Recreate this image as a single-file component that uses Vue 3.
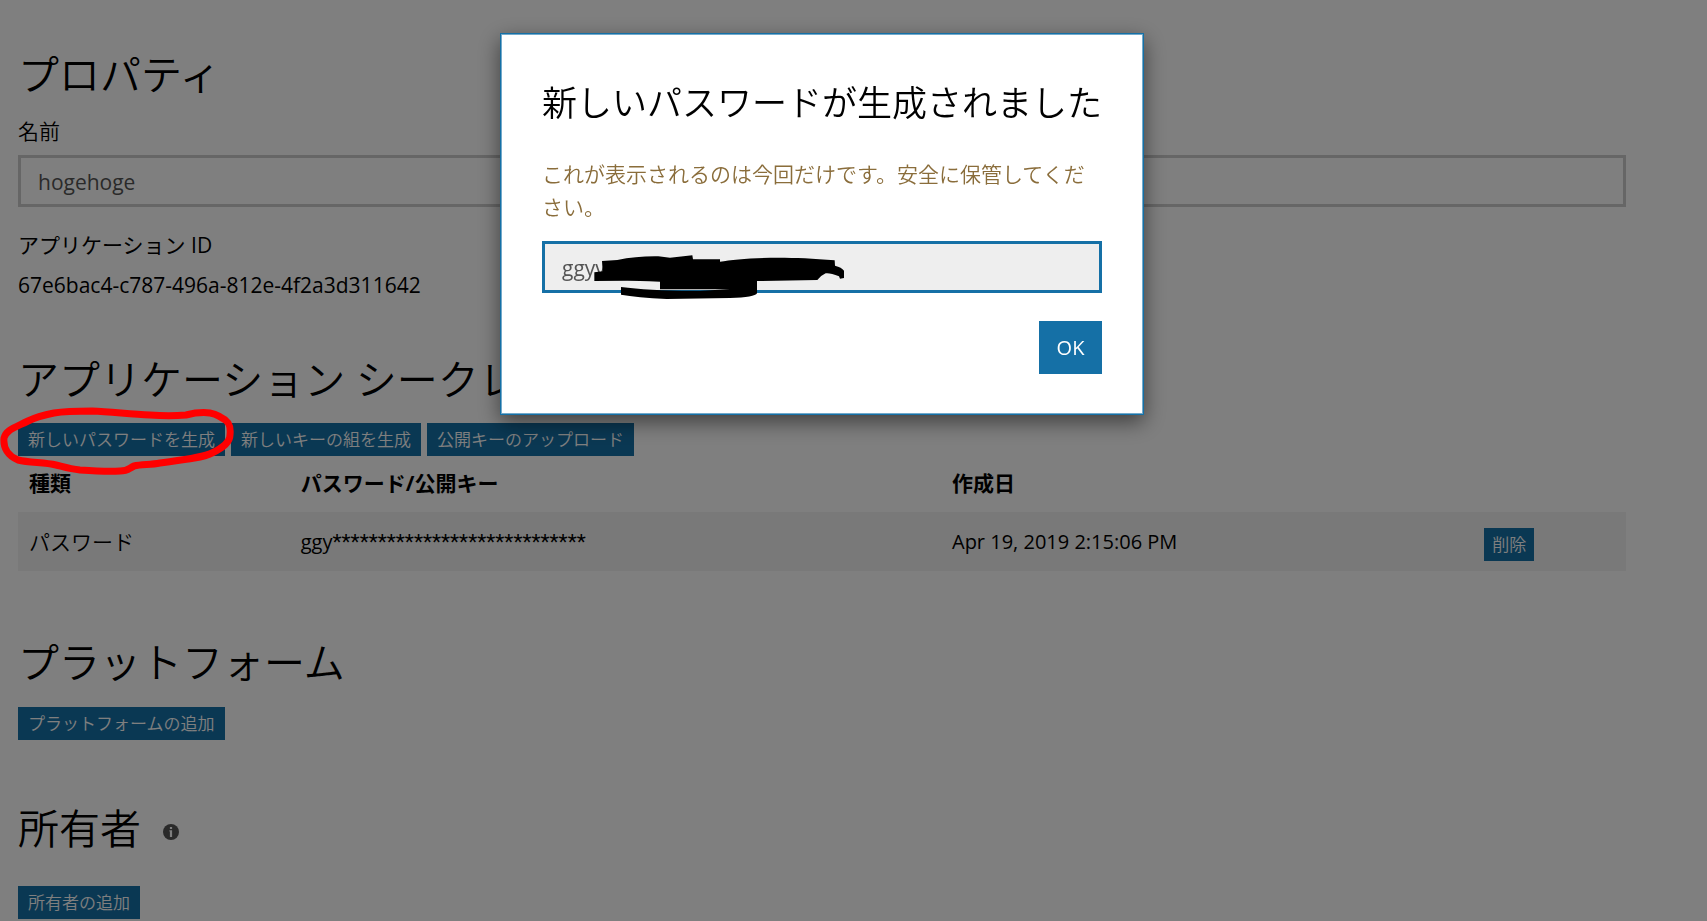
<template>
  <main class="page">
    <section class="properties">
      <h2>プロパティ</h2>
      <label class="field-label" for="appName">名前</label>
      <input id="appName" v-model="appName" class="text-input" type="text" />
      <div class="field-label app-id-label">アプリケーション ID</div>
      <p class="app-id">{{ appId }}</p>
    </section>

    <section class="secrets">
      <h2>アプリケーション シークレット</h2>
      <div class="button-row">
        <button class="btn" type="button" @click="showDialog = true">新しいパスワードを生成</button>
        <button class="btn" type="button">新しいキーの組を生成</button>
        <button class="btn" type="button">公開キーのアップロード</button>
      </div>
      <table class="secret-table">
        <thead>
          <tr>
            <th class="col-type">種類</th>
            <th class="col-key">パスワード/公開キー</th>
            <th class="col-date">作成日</th>
            <th></th>
          </tr>
        </thead>
        <tbody>
          <tr v-for="secret in secrets" :key="secret.prefix">
            <td class="type">{{ secret.type }}</td>
            <td>{{ secret.prefix }}<span class="mask">{{ secret.mask }}</span></td>
            <td>{{ secret.created }}</td>
            <td class="action"><button class="btn btn-delete" type="button">削除</button></td>
          </tr>
        </tbody>
      </table>
    </section>

    <section class="platforms">
      <h2>プラットフォーム</h2>
      <button class="btn" type="button">プラットフォームの追加</button>
    </section>

    <section class="owners">
      <h2>
        所有者
        <svg class="info-icon" viewBox="0 0 16 16" aria-hidden="true">
          <circle cx="8" cy="8" r="8" fill="#555" />
          <path d="M6.9 3h2.2v2H6.9zM6.4 6.2h2.7v6.8H6.9V7.4h-.5z" fill="#fff" />
        </svg>
      </h2>
      <button class="btn" type="button">所有者の追加</button>
    </section>
  </main>

  <div v-if="showDialog" class="overlay">
    <div class="dialog" role="dialog" aria-labelledby="dialogTitle">
      <h3 id="dialogTitle">新しいパスワードが生成されました</h3>
      <label class="warning" for="newPassword">
        これが表示されるのは今回だけです。安全に保管してください。
      </label>
      <div class="password-wrap">
        <input id="newPassword" class="text-input password" type="text" :value="password" readonly />
        <svg class="scribble" viewBox="0 0 960 240" aria-hidden="true">
          <path
            d="M186 93L232 90Q290 78 355 79L390 83L457 76L459 88L540 88L540 95C600 85 720 76 884 91L885 107Q905 112 912 122L912 144L900 146L897 139Q870 128 857 130Q840 138 832 150L651 153L651 190Q645 202 570 204L380 207Q290 202 243 194L243 171Q330 183 480 182L570 178L360 178L360 155Q290 152 262 152L163 153L163 127L188 124Z"
          />
        </svg>
      </div>
      <div class="dialog-footer">
        <button class="btn-ok" type="button" @click="showDialog = false">OK</button>
      </div>
    </div>
  </div>

  <!-- hand-drawn ring around the generate button -->
  <svg class="ring" viewBox="0 0 240 72" aria-hidden="true">
    <path
      d="M4 38C6 30 14 28 28 21C36 17 44 15 54 13C66 11 78 11 92 11C112 12 130 14 150 15C164 16 174 16 186 15C194 13 202 12 210 13C217 14 218 16 222 18C229 21 231 26 230 35C230 42 224 47 212 53C202 58 182 60 160 63C150 65 142 64 134 66C128 69 128 71 120 71C108 72 94 71 80 70C70 69 64 67 56 65C44 62 30 63 18 60C8 56 3 48 4 38Z"
    />
  </svg>
</template>

<script setup>
import { ref } from 'vue'

const appName = ref('hogehoge')
const appId = '67e6bac4-c787-496a-812e-4f2a3d311642'
const password = ref('ggyv')
const showDialog = ref(true)

const secrets = ref([
  {
    type: 'パスワード',
    prefix: 'ggy',
    mask: '*'.repeat(28),
    created: 'Apr 19, 2019 2:15:06 PM'
  }
])
</script>

<style>
body {
  background-color: #ffffff;
  overflow: hidden;
}
</style>

<style scoped>
.page,
.overlay {
  font-family: 'Open Sans', 'Noto Sans CJK JP', sans-serif;
  font-size: 21px;
  font-weight: 350;
  line-height: 28px;
  color: #000000;
}

.page {
  padding: 51px 81px 0 18px;
}

input,
button {
  font-family: inherit;
  font-weight: inherit;
}

h2 {
  margin: 0;
  padding-bottom: 2px;
  font-size: 41px;
  font-weight: 350;
  line-height: 46px;
}

.field-label {
  display: block;
  margin: 18px 0 10px;
}

.text-input {
  display: block;
  box-sizing: border-box;
  width: 100%;
  height: 52px;
  padding: 1px 17px 0;
  border: 3px solid #cccccc;
  background-color: #ffffff;
  color: #555555;
  font-size: 21px;
  font-weight: 400;
}

.app-id-label {
  margin: 24px 0 12px;
  font-weight: 400;
}

.app-id {
  margin: 0;
  font-weight: 400;
}

.secrets {
  margin-top: 57px;
}

.button-row {
  display: flex;
  gap: 6px;
  margin-top: 19px;
}

.btn {
  display: block;
  height: 33px;
  padding: 0 10px;
  border: 0;
  background-color: #1570a6;
  color: #ffffff;
  font-size: 17px;
  font-weight: 350;
  line-height: 33px;
  white-space: nowrap;
  cursor: pointer;
}

.btn-delete {
  padding: 0 8px;
}

.secret-table {
  width: 100%;
  table-layout: fixed;
  border-collapse: collapse;
}

.secret-table th,
.secret-table td {
  box-sizing: border-box;
  padding: 13px 11px 15px;
  text-align: left;
}

.secret-table td {
  height: 59px;
  padding: 0 11px;
  background-color: #f2f2f2;
  font-size: 20px;
  font-weight: 400;
}

.secret-table td.type {
  font-size: 21px;
  font-weight: 350;
}

.secret-table td.action {
  padding-top: 5px;
}

.col-type {
  width: 16.9%;
}

.col-key {
  width: 40.5%;
}

.col-date {
  width: 33.1%;
}

.mask {
  font-family: Roboto, sans-serif;
  font-size: 21px;
}

.platforms {
  margin-top: 68px;
}

.platforms .btn {
  margin-top: 20px;
}

.owners {
  margin-top: 65px;
}

.owners h2 {
  display: flex;
  align-items: center;
  gap: 22px;
}

.info-icon {
  width: 16px;
  height: 16px;
  margin-top: 8px;
}

.owners .btn {
  margin-top: 33px;
}

.overlay {
  position: fixed;
  inset: 0;
  display: flex;
  justify-content: center;
  align-items: flex-start;
  padding: 33px 81px 0 18px;
  background-color: rgba(0, 0, 0, 0.5);
}

.dialog {
  box-sizing: border-box;
  width: 644px;
  padding: 45px 41px 40px;
  border: 1px solid #1570a6;
  background-color: #ffffff;
  box-shadow:
    inset 0 0 0 1px #73a9ca,
    0 7px 20px rgba(0, 0, 0, 0.5);
}

.dialog h3 {
  margin: 0 0 31px;
  font-size: 35px;
  font-weight: 350;
  line-height: 48px;
  white-space: nowrap;
}

.warning {
  display: block;
  margin-bottom: 17px;
  color: #8a6d3b;
  line-height: 33px;
}

.password-wrap {
  position: relative;
}

.password {
  border-color: #1570a6;
  background-color: #eeeeee;
}

.scribble {
  position: absolute;
  top: -11px;
  left: -2px;
  width: 320px;
  height: 80px;
  pointer-events: none;
}

.dialog-footer {
  display: flex;
  justify-content: flex-end;
  margin-top: 28px;
}

.btn-ok {
  width: 63px;
  height: 53px;
  padding: 0;
  border: 0;
  background-color: #1570a6;
  color: #ffffff;
  font-size: 20px;
  font-weight: 400;
  cursor: pointer;
}

.ring {
  position: absolute;
  top: 400px;
  left: 0;
  width: 240px;
  height: 72px;
  overflow: visible;
  pointer-events: none;
}

.ring path {
  fill: none;
  stroke: #ff0000;
  stroke-width: 7;
  stroke-linejoin: round;
}
</style>
